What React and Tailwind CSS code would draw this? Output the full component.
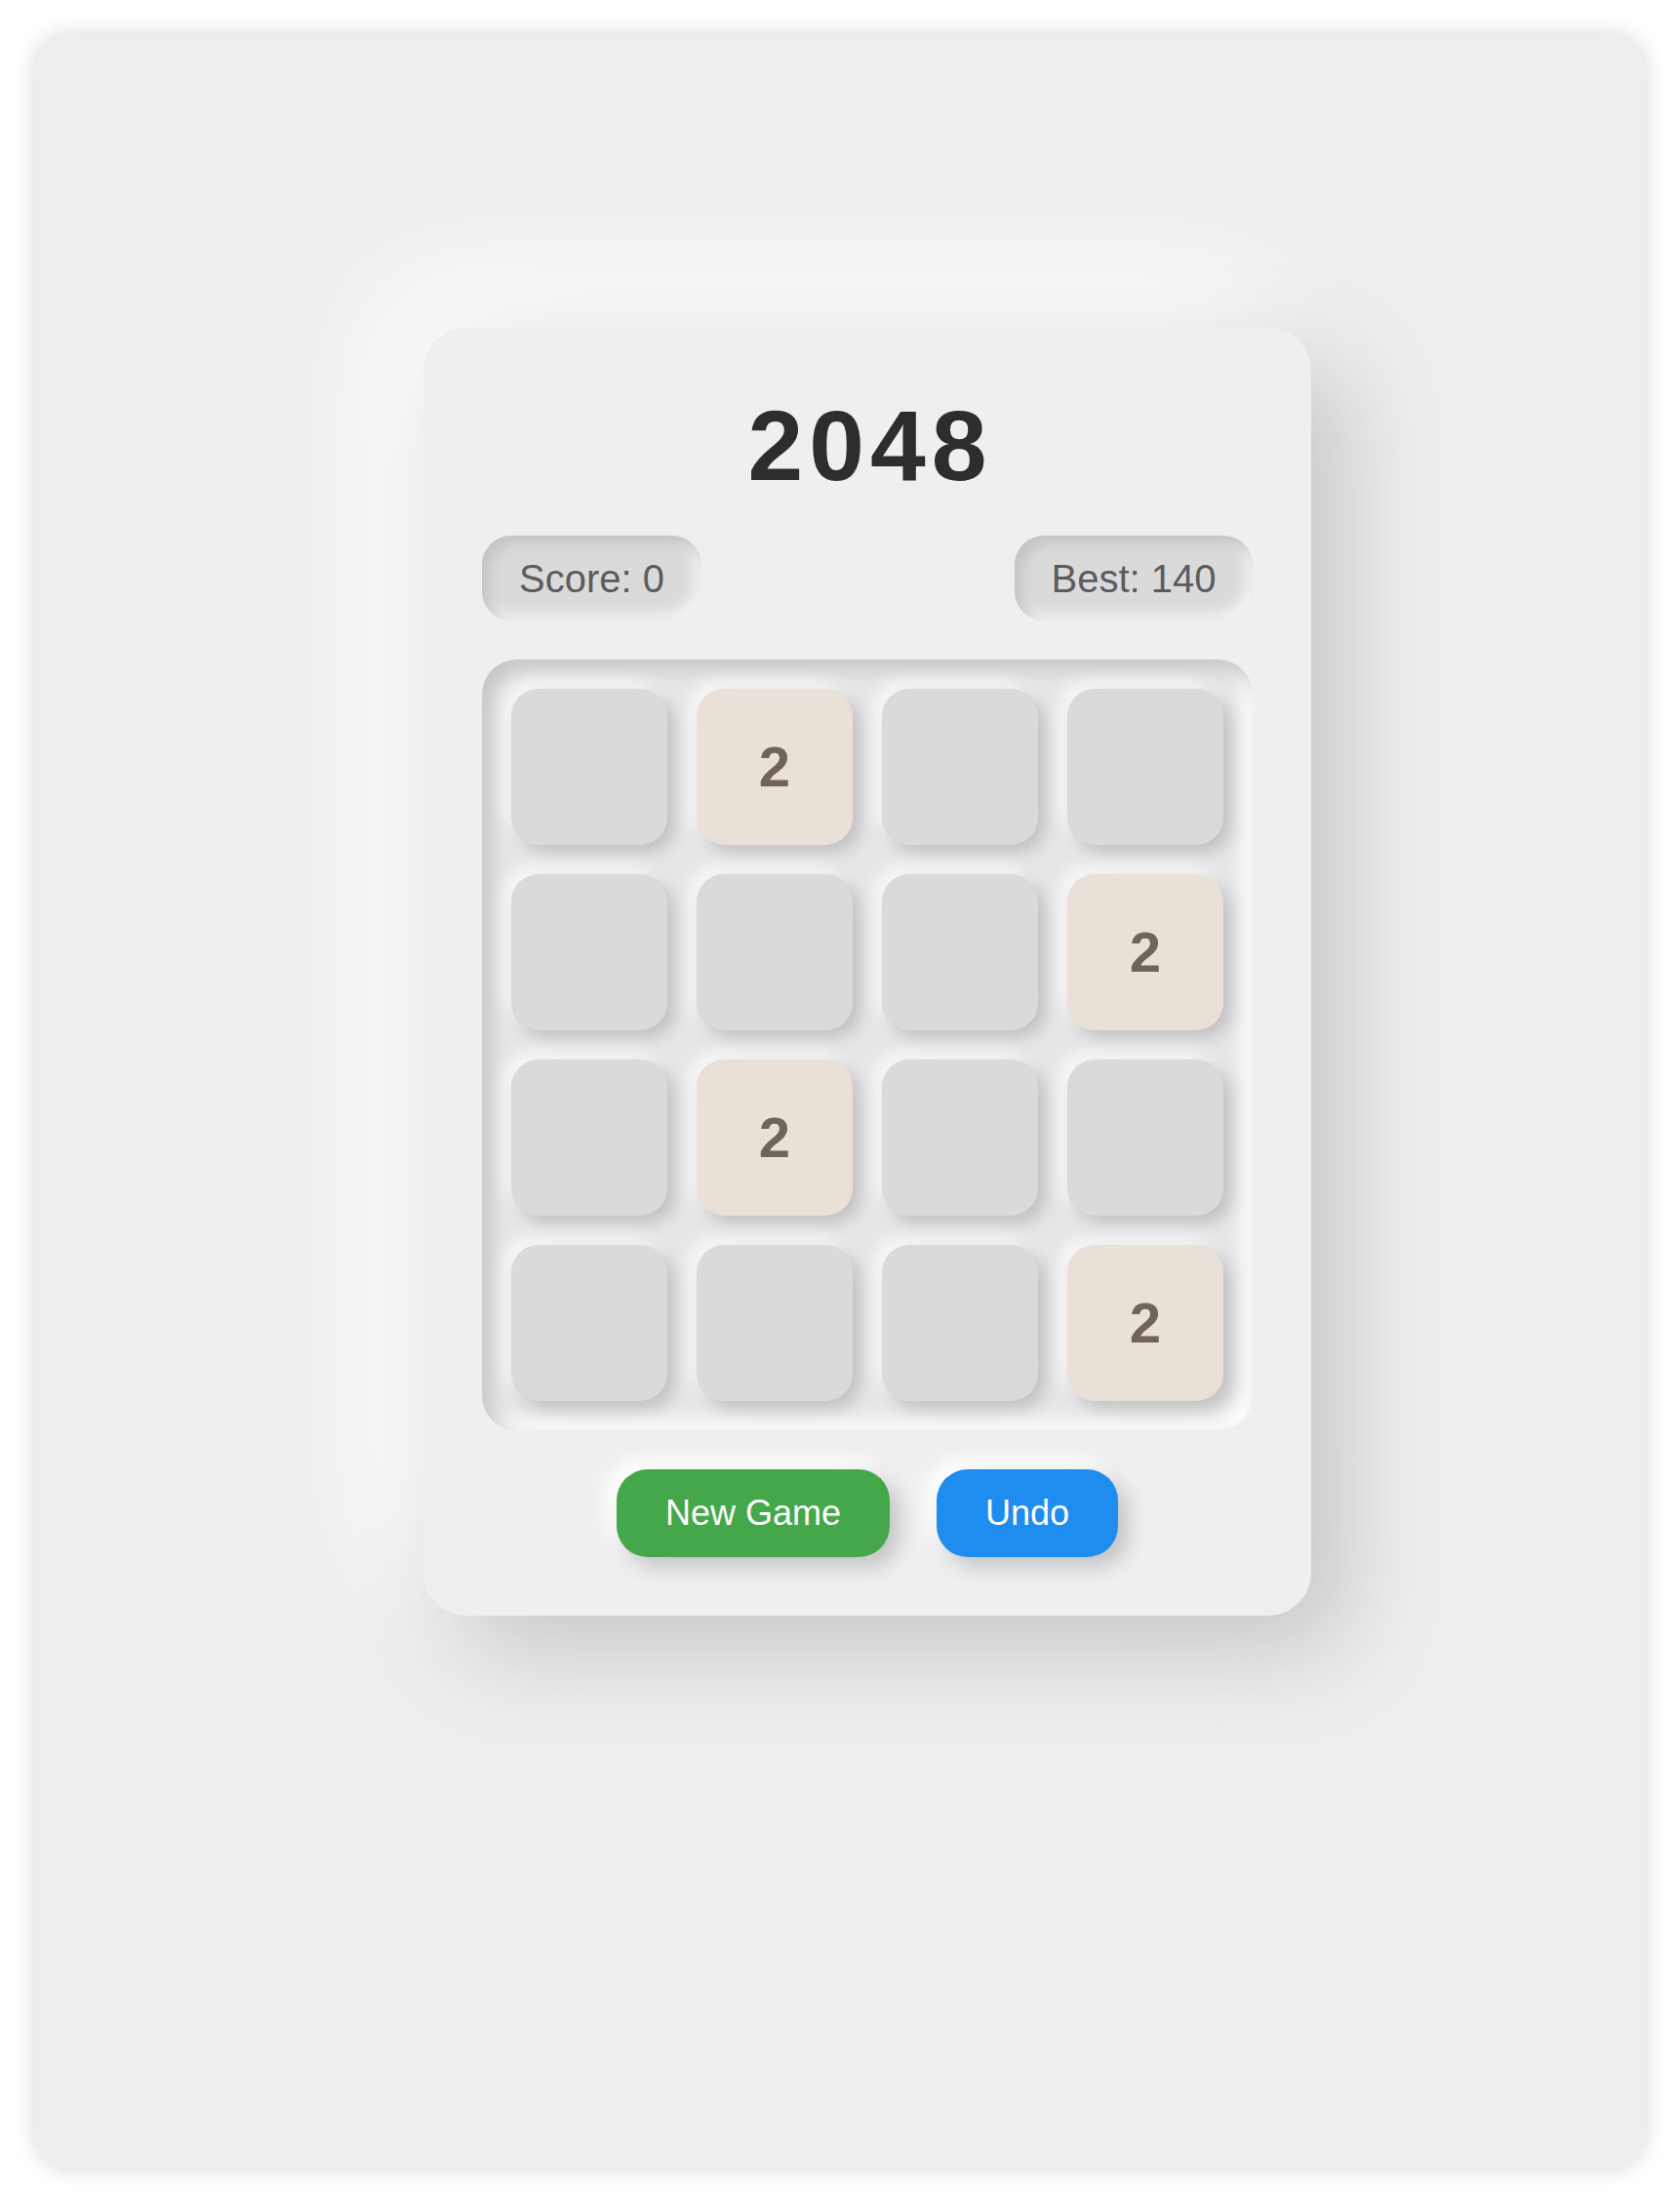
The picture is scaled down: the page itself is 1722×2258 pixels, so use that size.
import React from "react";

const board = [
  [0, 2, 0, 0],
  [0, 0, 0, 2],
  [0, 2, 0, 0],
  [0, 0, 0, 2],
];

function Tile({ value }) {
  if (!value) {
    return (
      <div className="h-[160px] w-[160px] rounded-[28px] bg-[#dadada] shadow-[8px_8px_16px_#c2c2c4,-8px_-8px_16px_#f8f8f9]" />
    );
  }
  return (
    <div className="flex h-[160px] w-[160px] items-center justify-center rounded-[28px] bg-[#e9e0d7] shadow-[8px_8px_16px_#c2c2c4,-8px_-8px_16px_#f8f8f9]">
      <span className="text-[58px] font-bold leading-none text-[#6e6458]">{value}</span>
    </div>
  );
}

export default function App() {
  return (
    <div className="min-h-[2258px] bg-white p-[36px] font-['Liberation_Sans',Helvetica,Arial,sans-serif]">
      <div className="h-[2186px] rounded-[34px] bg-[#eeeef0] pl-[398px] pt-[300px] shadow-[0_0_22px_rgba(0,0,0,0.17)]">
        <div className="flex w-[910px] flex-col items-center rounded-[44px] bg-[#efeff1] px-[60px] pb-[60px] pt-[70px] shadow-[36px_36px_100px_#c6c6c8,-44px_-44px_120px_#ffffff]">
          <h1 className="h-[100px] pl-[6px] text-[102px] font-bold leading-none tracking-[6px] text-[#2d2d2d]">2048</h1>

          <div className="mt-[43px] flex w-full items-center justify-between">
            <div className="flex h-[87px] w-[225px] items-center justify-center rounded-[30px] bg-[#dadadb] text-[40px] leading-none text-[#5c5c5c] shadow-[inset_7px_7px_14px_#c3c3c5,inset_-7px_-7px_14px_#f6f6f7]">
              Score: 0
            </div>
            <div className="flex h-[87px] w-[244px] items-center justify-center rounded-[30px] bg-[#dadadb] text-[40px] leading-none text-[#5c5c5c] shadow-[inset_7px_7px_14px_#c3c3c5,inset_-7px_-7px_14px_#f6f6f7]">
              Best: 140
            </div>
          </div>

          <div className="mt-[40px] grid w-[790px] grid-cols-4 gap-[30px] rounded-[36px] bg-[#e6e6e8] p-[30px] shadow-[inset_10px_10px_20px_#c6c6c8,inset_-10px_-10px_20px_#ffffff]">
            {board.flat().map((v, i) => (
              <Tile key={i} value={v} />
            ))}
          </div>

          <div className="mt-[40px] flex items-center gap-[48px]">
            <button className="flex h-[90px] w-[280px] items-center justify-center rounded-[32px] bg-[#44a84a] text-[36px] leading-none text-white shadow-[10px_10px_20px_#c4c4c6,-10px_-10px_20px_#ffffff]">
              New Game
            </button>
            <button className="flex h-[90px] w-[186px] items-center justify-center rounded-[32px] bg-[#1f8cf0] text-[36px] leading-none text-white shadow-[10px_10px_20px_#c4c4c6,-10px_-10px_20px_#ffffff]">
              Undo
            </button>
          </div>
        </div>
      </div>
    </div>
  );
}
